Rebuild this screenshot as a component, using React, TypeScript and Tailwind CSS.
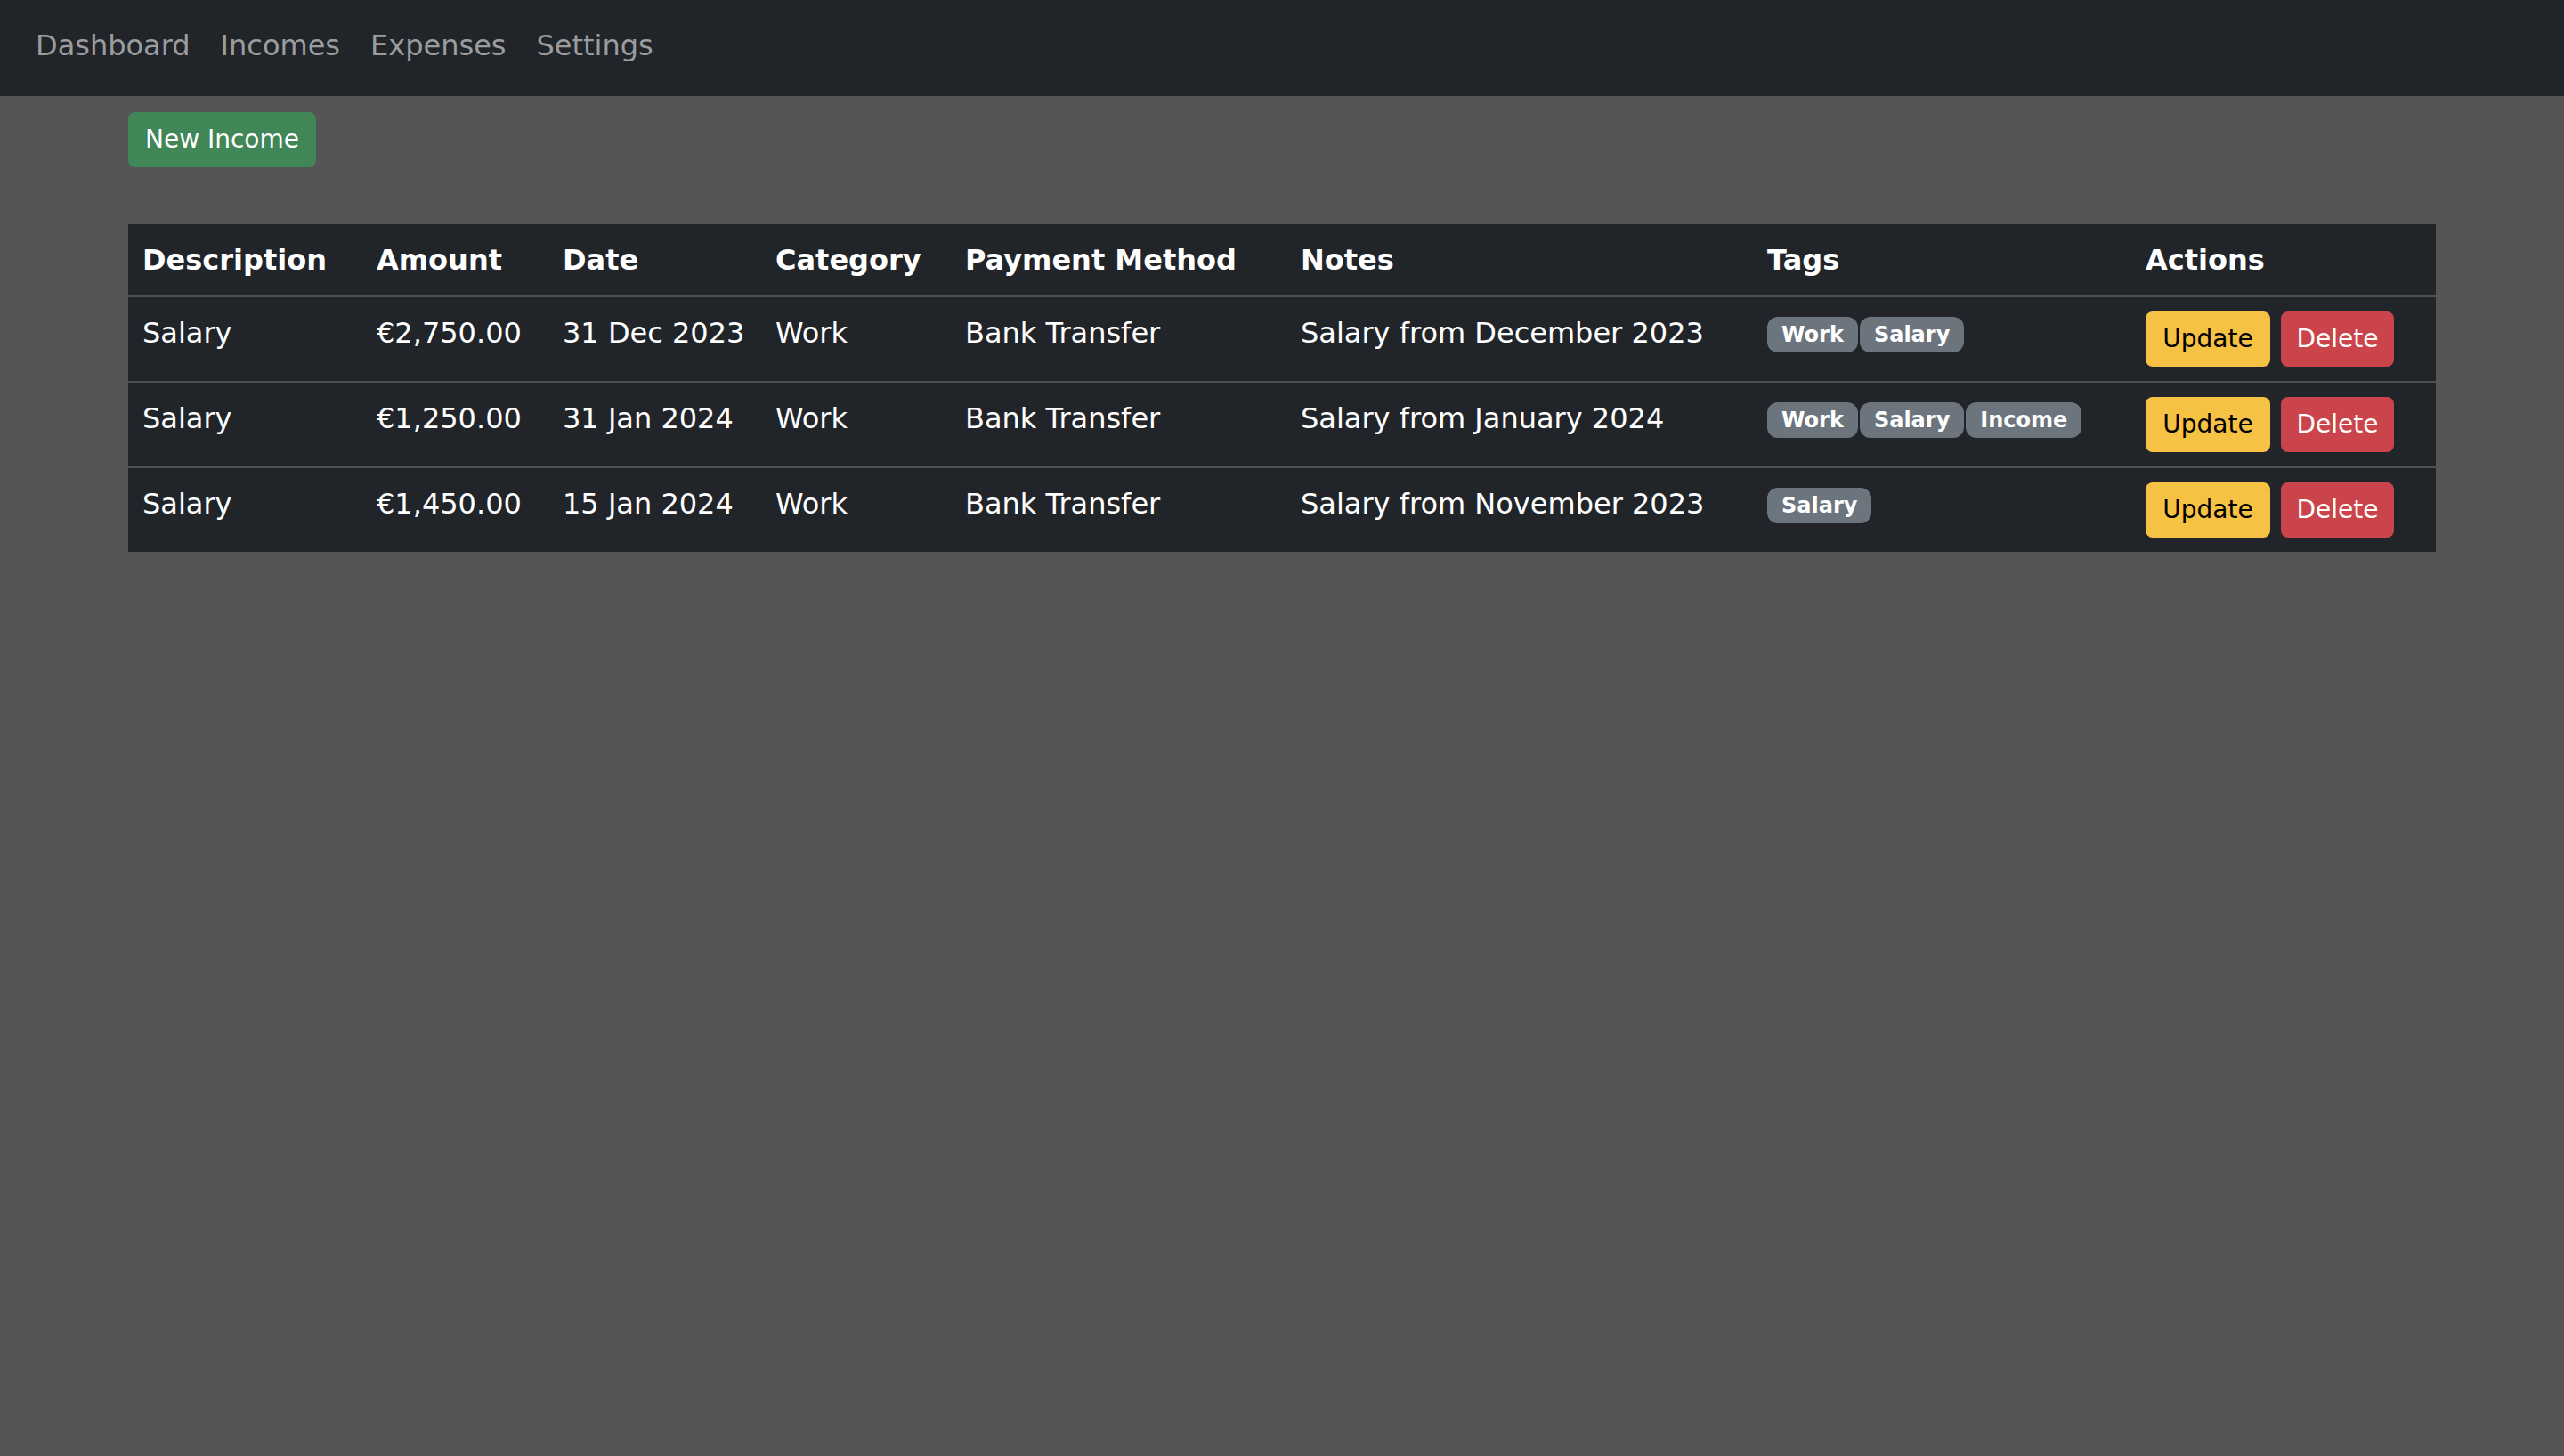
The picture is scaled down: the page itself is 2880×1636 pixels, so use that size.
import React from "react";

type Row = {
  description: string;
  amount: string;
  date: string;
  category: string;
  method: string;
  notes: string;
  tags: string[];
};

const rows: Row[] = [
  {
    description: "Salary",
    amount: "€2,750.00",
    date: "31 Dec 2023",
    category: "Work",
    method: "Bank Transfer",
    notes: "Salary from December 2023",
    tags: ["Work", "Salary"],
  },
  {
    description: "Salary",
    amount: "€1,250.00",
    date: "31 Jan 2024",
    category: "Work",
    method: "Bank Transfer",
    notes: "Salary from January 2024",
    tags: ["Work", "Salary", "Income"],
  },
  {
    description: "Salary",
    amount: "€1,450.00",
    date: "15 Jan 2024",
    category: "Work",
    method: "Bank Transfer",
    notes: "Salary from November 2023",
    tags: ["Salary"],
  },
];

const headers = [
  "Description",
  "Amount",
  "Date",
  "Category",
  "Payment Method",
  "Notes",
  "Tags",
  "Actions",
];

const widths = [263, 209, 239, 213, 377, 524, 425, 342];

export default function App() {
  return (
    <div
      className="min-h-screen bg-[#555555] text-white"
      style={{ fontFamily: '"DejaVu Sans", "Liberation Sans", sans-serif' }}
    >
      <nav className="h-[108px] bg-[#212529] flex items-center px-[23px] pb-[6px]">
        <ul className="flex items-center">
          {["Dashboard", "Incomes", "Expenses", "Settings"].map((l) => (
            <li key={l}>
              <a className="block px-[17px] text-[32px] leading-[48px] text-[#9a9c9e]">
                {l}
              </a>
            </li>
          ))}
        </ul>
      </nav>

      <main className="w-[2592px] mx-auto pt-[18px]">
        <button className="h-[62px] px-[19px] rounded-[8px] bg-[#418656] text-white text-[28px] leading-[42px]">
          New Income
        </button>

        <table className="mt-[64px] w-[2592px] table-fixed border-collapse bg-[#212529]">
          <colgroup>
            {widths.map((w, i) => (
              <col key={i} style={{ width: w }} />
            ))}
          </colgroup>
          <thead>
            <tr className="border-b-2 border-[#4d5154]">
              {headers.map((h) => (
                <th
                  key={h}
                  className="p-[16px] text-left align-top text-[32px] leading-[48px] font-bold whitespace-nowrap"
                >
                  {h}
                </th>
              ))}
            </tr>
          </thead>
          <tbody>
            {rows.map((r, i) => (
              <tr
                key={i}
                className={
                  i < rows.length - 1 ? "border-b-2 border-[#4d5154]" : ""
                }
              >
                {[r.description, r.amount, r.date, r.category, r.method, r.notes].map(
                  (c, j) => (
                    <td
                      key={j}
                      className="p-[16px] align-top text-[32px] leading-[48px] whitespace-nowrap"
                    >
                      {c}
                    </td>
                  )
                )}
                <td className="p-[16px] align-top">
                  <div className="mt-[6px] flex gap-[2px]">
                    {r.tags.map((t) => (
                      <span
                        key={t}
                        className="h-[40px] px-[16px] rounded-[12px] bg-[#6c757d] text-white text-[24px] leading-[40px] font-bold"
                      >
                        {t}
                      </span>
                    ))}
                  </div>
                </td>
                <td className="p-[16px] align-top">
                  <div className="flex gap-[12px]">
                    <button className="h-[62px] w-[140px] rounded-[8px] bg-[#f6c244] text-black text-[28px] leading-[42px]">
                      Update
                    </button>
                    <button className="h-[62px] w-[127px] rounded-[8px] bg-[#cc444b] text-white text-[28px] leading-[42px]">
                      Delete
                    </button>
                  </div>
                </td>
              </tr>
            ))}
          </tbody>
        </table>
      </main>
    </div>
  );
}
